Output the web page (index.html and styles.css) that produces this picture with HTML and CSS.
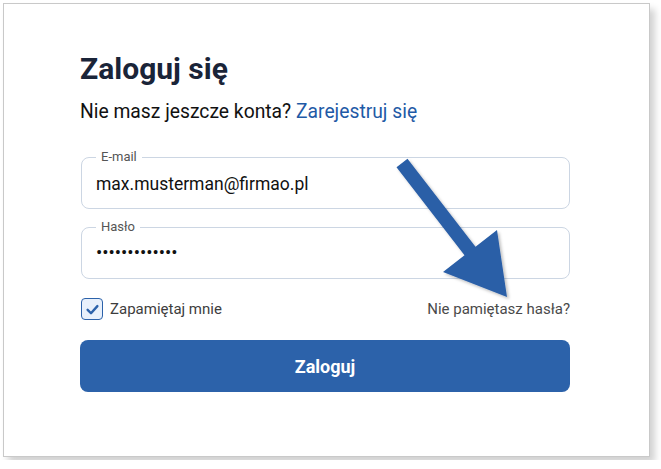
FILE: index.html
```html
<!DOCTYPE html>
<html lang="pl">
<head>
  <meta charset="UTF-8" />
  <meta name="viewport" content="width=device-width, initial-scale=1.0"/>
  <title>Zaloguj się</title>
  <link rel="stylesheet" href="styles.css">
</head>
<body>
  <div class="frame">
    <div class="login">
      <h1>Zaloguj się</h1>
      <p class="signup">Nie masz jeszcze konta? <a href="#">Zarejestruj się</a></p>

      <div class="field">
        <span class="field-label">E-mail</span>
        <div class="value">max.musterman@firmao.pl</div>
      </div>

      <div class="field">
        <span class="field-label">Hasło</span>
        <div class="value dots">•••••••••••••</div>
      </div>

      <div class="options">
        <label class="remember">
          <span class="check">
            <svg viewBox="0 0 20 20" width="15" height="15"><path d="M3.5 10.5 L8 15 L16.5 5.5" fill="none" stroke="#2c62aa" stroke-width="3.2" stroke-linecap="round" stroke-linejoin="round"/></svg>
          </span>
          Zapamiętaj mnie
        </label>
        <a href="#" class="forgot">Nie pamiętasz hasła?</a>
      </div>

      <button class="submit">Zaloguj</button>
    </div>
  </div>

  <!-- annotation arrow drawn over the form -->
  <svg class="arrow" viewBox="0 0 661 469" width="661" height="469">
    <defs>
      <filter id="sh" x="-20%" y="-20%" width="140%" height="140%">
        <feDropShadow dx="2" dy="2" stdDeviation="1.5" flood-color="#000" flood-opacity="0.25"/>
      </filter>
    </defs>
    <polygon points="396.5,167.3 407.5,158.7 475.5,246.7 497,230 507,297 443,272 464.5,255.3" fill="#2b5fa7" filter="url(#sh)"/>
  </svg>
</body>
</html>
```

FILE: styles.css
```css
body {
  margin: 0;
  padding: 3px;
  font-family: Roboto, "Liberation Sans", Arial, sans-serif;
  background: #ffffff;
  position: relative;
}

.frame {
  box-sizing: border-box;
  width: 647px;
  height: 454px;
  border: 1px solid #c9c9c9;
  background: #ffffff;
  box-shadow: 5px 6px 7px rgba(0, 0, 0, 0.18);
}

.login {
  padding: 47px 0 0 76px;
  width: 490px;
}

h1 {
  margin: 0;
  font-size: 30px;
  font-weight: 700;
  color: #1a2438;
  line-height: 36px;
}

.signup {
  margin: 12px 0 0;
  font-size: 19.3px;
  color: #111;
  line-height: 26px;
}

.signup a {
  color: #1f5aa6;
  text-decoration: none;
}

.field {
  position: relative;
  display: flex;
  align-items: center;
  box-sizing: border-box;
  height: 52px;
  margin: 32px 0 0 1px;
  padding: 0 14px;
  border: 1px solid #ccd6e3;
  border-radius: 8px;
}

.field + .field {
  margin-top: 18px;
}

/* label sits on top of the border line */
.field-label {
  position: absolute;
  left: 14px;
  top: -9px;
  padding: 0 5px;
  background: #fff;
  font-size: 13px;
  line-height: 16px;
  color: #555;
}

.value {
  font-size: 17.5px;
  color: #111;
  line-height: 24px;
  padding-top: 2px;
}

.dots {
  font-size: 18.6px;
  padding-top: 0;
}

.options {
  display: flex;
  justify-content: space-between;
  align-items: center;
  height: 22px;
  margin-top: 19px;
  margin-left: 1px;
}

.remember {
  display: flex;
  align-items: center;
  gap: 7px;
  font-size: 15px;
  color: #3d3d3d;
}

.check {
  display: flex;
  align-items: center;
  justify-content: center;
  box-sizing: border-box;
  width: 22px;
  height: 22px;
  border: 1.5px solid #2c62aa;
  border-radius: 4px;
  background: #e8f0fb;
}

.forgot {
  font-size: 15px;
  color: #4a4a4a;
  text-decoration: none;
}

.submit {
  display: block;
  width: 490px;
  height: 52px;
  margin-top: 20px;
  border: none;
  border-radius: 8px;
  background: #2c62aa;
  color: #fff;
  font-family: inherit;
  font-size: 18px;
  font-weight: 700;
  cursor: pointer;
}

.arrow {
  position: absolute;
  left: 0;
  top: 0;
  pointer-events: none;
}
```
